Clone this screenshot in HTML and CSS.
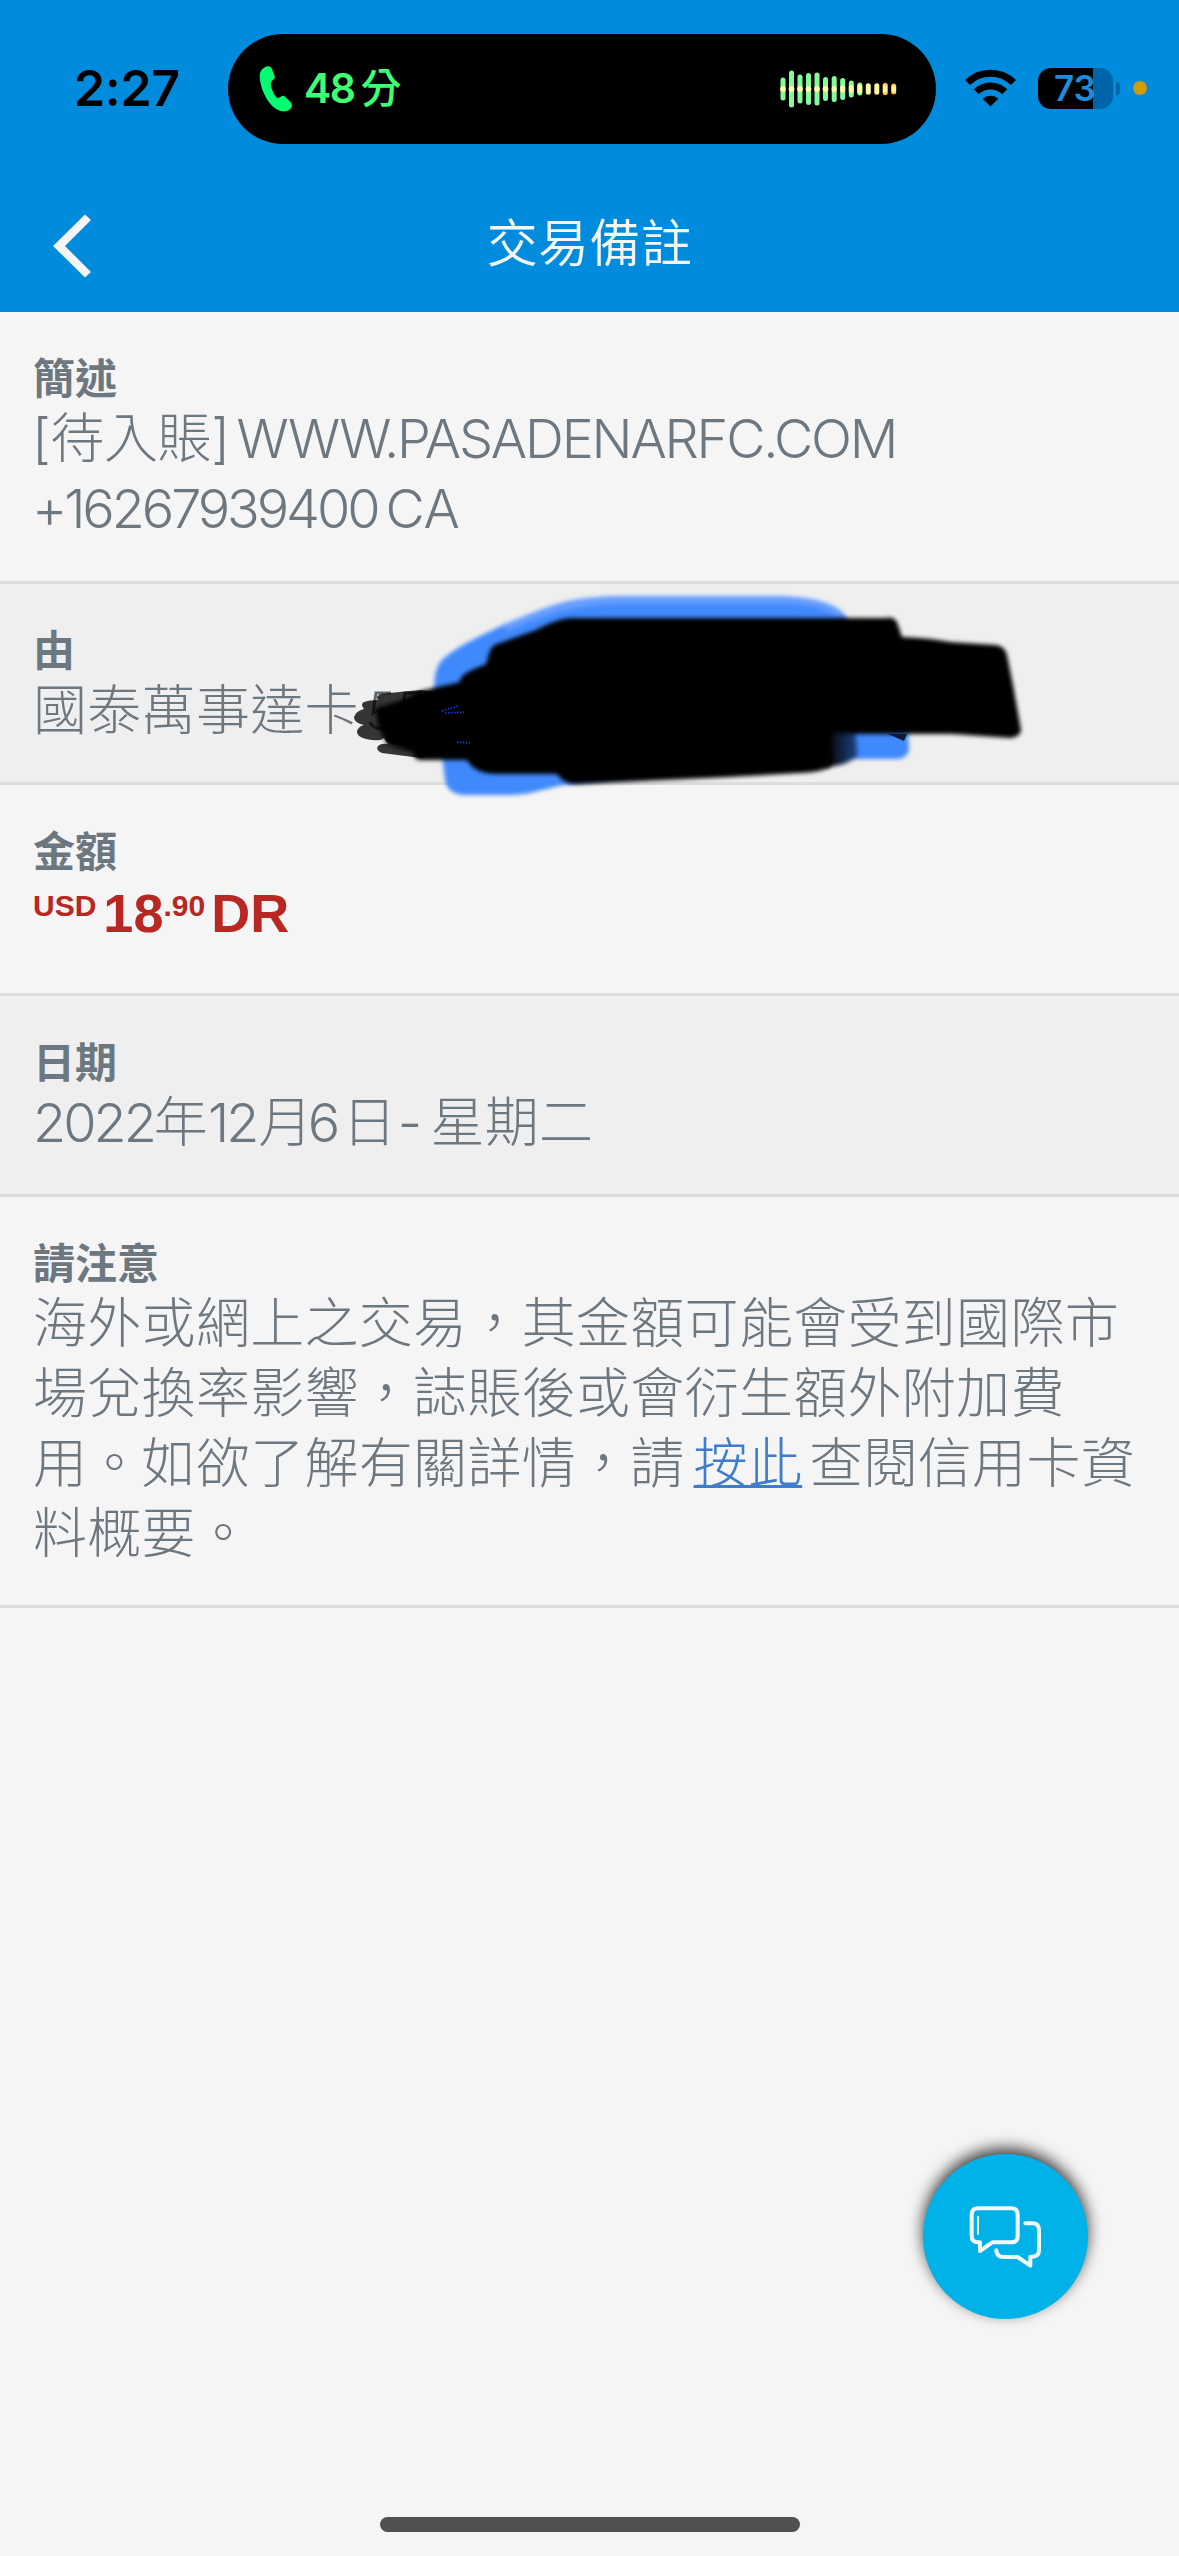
FILE: index.html
```html
<!DOCTYPE html>
<html lang="zh-Hant">
<head>
<meta charset="utf-8">
<title>交易備註</title>
<link rel="stylesheet" href="styles.css">
</head>
<body>
<div class="screen">
  <header class="header">
    <div class="status">
      <div class="time">2:27</div>
      <div class="island">
        <svg class="phone" width="34" height="46" viewBox="0 0 34 46"><path d="M7 .8C9.500-.3 12 .5 13 3L15.800 10.500C16.500 13 12.500 14 11.800 17.500C11.500 21 14.500 28 17.500 31.500C20 33.500 22 28.800 25 29.800L32 36.500C35 41 30 45.500 25 45.500C16 45.500 8 36 3.500 24C.5 15-2 4 7 .8Z" fill="#04fc70"/></svg>
        <span class="call">48<span class="unit">分</span></span>
        <svg class="wave" width="118" height="40" viewBox="0 0 118 40">
          <defs><linearGradient id="tip" x1="0" y1="0" x2="0" y2="1"><stop offset="0" stop-color="#ff9d1c"/><stop offset=".3" stop-color="#fff29a"/><stop offset=".7" stop-color="#fff29a"/><stop offset="1" stop-color="#ff9d1c"/></linearGradient></defs>
          <g fill="#84fb98">
            <rect x="0.500" y="8.500" width="5" height="23" rx="2.500"/><rect x="9" y="1.500" width="5" height="37" rx="2.500"/><rect x="17.500" y="5.500" width="5" height="29" rx="2.500"/><rect x="26" y="4" width="5" height="32" rx="2.500"/><rect x="34.500" y="3.500" width="5" height="33" rx="2.500"/><rect x="43" y="8" width="5" height="24" rx="2.500"/><rect x="51.700" y="7" width="5" height="26" rx="2.500"/><rect x="60.200" y="9" width="5" height="22" rx="2.500"/><rect x="68.800" y="11.500" width="5" height="17" rx="2.500"/><rect x="77.300" y="13.500" width="5" height="13" rx="2.500"/>
          </g>
          <g fill="#fff8a0">
            <circle cx="3" cy="20" r="2.900"/><circle cx="11.500" cy="20" r="2.900"/><circle cx="20" cy="20" r="2.900"/><circle cx="28.500" cy="20" r="2.900"/><circle cx="37" cy="20" r="2.900"/><circle cx="45.500" cy="20" r="2.900"/><rect x="51.700" y="17" width="5" height="6" rx="2"/><rect x="60.200" y="16.500" width="5" height="7" rx="2"/><rect x="68.800" y="16" width="5" height="8" rx="2"/><rect x="77.300" y="15.500" width="5" height="9" rx="2"/><rect x="85.800" y="14.300" width="5" height="11.500" rx="2.500"/><rect x="94.300" y="14.300" width="5" height="11.500" rx="2.500"/>
          </g>
          <rect x="102.700" y="13.700" width="5" height="12.600" rx="2.500" fill="url(#tip)"/><rect x="111.200" y="14.500" width="5" height="11" rx="2.500" fill="url(#tip)"/>
        </svg>
      </div>
      <svg class="wifi" width="51" height="38" viewBox="0 0 51 38"><g fill="none" stroke="#000" stroke-width="7"><path d="M2.500 13.500A33 33 0 0 1 48.500 13.500"/><path d="M11.200 22.700A20.500 20.500 0 0 1 39.800 22.700"/></g><path d="M25.500 37.500L17.700 29.800A11.500 11.500 0 0 1 33.300 29.800Z"/></svg>
      <div class="battery"><span class="level">73</span></div>
      <div class="nub"></div>
      <div class="mic"></div>
    </div>
    <nav class="nav">
      <svg class="back" width="38" height="64" viewBox="0 0 38 64"><path d="M32 0.500L38 6L12 32L38 58L32 63.500L0 32Z" fill="#f5f5f5"/></svg>
      <h1 class="title">交易備註</h1>
    </nav>
  </header>

  <main>
    <section class="row first">
      <h2 class="label">簡述</h2>
      <p class="value"><span class="tag">[待入賬]</span><span class="host">WWW.PASADENARFC.COM</span><br><span class="num tel">+16267939400</span><span class="state">CA</span></p>
    </section>
    <section class="row alt">
      <h2 class="label">由</h2>
      <p class="value">國泰萬事達卡</p>
      <svg class="scribble" width="700" height="230" viewBox="340 580 700 230">
        <defs>
          <filter id="soft" x="-5%" y="-10%" width="110%" height="120%"><feGaussianBlur stdDeviation="2"/></filter>
          <linearGradient id="fade" x1="0" x2="1" y1="0" y2="0"><stop offset="0" stop-color="#000"/><stop offset="1" stop-color="#1f4688"/></linearGradient>
        </defs>
        <g fill="none" stroke="#5d666e" stroke-width="3"><path d="M391 693H376L373 713Q386 706 391 717Q392 729 381 729Q372 728 370 722"/><path d="M421 693H405L402 713"/></g>
        <g filter="url(#soft)">
          <path d="M434 690C434 676 436 665 444 658C462 643 485 634 505 624C535 612 560 600 590 598Q605 596 626 596H780C805 597 825 601 837 608Q845 613 848 622V650L907 700L909 750Q907 759 896 759H850L700 770L563 785L530 793Q520 795 505 795H462Q447 793 445 780L442 755Z" fill="#4089fd"/>
          <path d="M505 628C545 610 575 601 626 600H780C810 600 830 606 840 615" fill="none" stroke="#669dff" stroke-width="7"/>
          <path d="M828 730H856L858 757L844 764L825 768Z" fill="url(#fade)"/>
        </g>
        <g fill="#000" fill-opacity=".78">
          <path d="M381 694Q398 692 421 690L436 692V753L421 758L382 753Q375 750 378 746Q381 743 388 744L384 738Q380 742 366 739Q356 736 357 731Q359 726 364 725Q354 723 354 717Q356 711 364 709Q360 704 364 702Q369 700 378 700Q375 696 381 694Z"/>
        </g>
        <path d="M386 742H414V749L388 746Z" fill="#efefef" fill-opacity=".12"/>
        <g filter="url(#soft)">
          <path d="M378 727L376 708L402 700L421 691L460 682C460 673 475 669 486 664C490 651 490 645 500 643L536 630Q560 617 575 618H885Q893 616 897 622L902 637Q930 638 950 642L995 645Q1004 645 1007 655L1013 685L1021 730Q1021 736 1011 738L952 734H833L832 750Q835 760 829 767Q822 772 800 773L730 777L577 784Q563 784 557 774H494Q474 773 467 760H421Q414 760 413 752L388 745Z" fill="#000"/>
        </g>
        <path d="M888 734H907L904 741Z" fill="#0c1a33"/>
        <g fill="none" stroke="#0b3cff" stroke-width="1.500" stroke-dasharray="1.500 1.500"><path d="M442 711L458 706"/><path d="M445 713L464 712"/><path d="M457 742L470 743"/></g>
      </svg>
    </section>
    <section class="row">
      <h2 class="label">金額</h2>
      <div class="amount"><span class="small usd">USD</span><span class="big">18</span><span class="small cents">.90</span><span class="big">DR</span></div>
    </section>
    <section class="row alt">
      <h2 class="label">日期</h2>
      <p class="value"><span class="num">2022</span>年<span class="num month">12</span>月<span class="num day">6</span>日<span class="dash">-</span>星期二</p>
    </section>
    <section class="row">
      <h2 class="label">請注意</h2>
      <p class="value">海外或網上之交易，其金額可能會受到國際市<br>場兌換率影響，誌賬後或會衍生額外附加費<br>用。如欲了解有關詳情，請<a class="link">按此</a>查閱信用卡資<br>料概要。</p>
    </section>
  </main>

  <div class="chat">
    <svg width="165" height="165" viewBox="131 162 495 495" fill="none" stroke="#f3f8fb" stroke-width="12" stroke-linecap="round" stroke-linejoin="round">
      <path d="M296 325H396Q415 325 415 344V408Q415 427 396 427H339L302 453V427H296Q277 427 277 408V344Q277 325 296 325Z"/>
      <path d="M296 350V402" stroke-width="6"/>
      <path d="M438 370H459Q479 370 479 390V450Q479 470 460 470H453V497L415 471H374Q351 471 351 451"/>
    </svg>
  </div>
  <div class="home"></div>
</div>
</body>
</html>
```
FILE: styles.css
```css
* { box-sizing: border-box; margin: 0; padding: 0; }

body {
  width: 1179px;
  background: #f5f5f5;
  font-family: Inter, "Noto Sans CJK TC", sans-serif;
  color: #6d7780;
}

.screen { position: relative; width: 1179px; height: 2556px; overflow: hidden; }

.header { height: 312px; background: #008bdd; }

.status { display: flex; align-items: center; height: 178px; }

.time {
  width: 228px;
  padding: 0 0 3px 74px;
  font-size: 50px;
  font-weight: 600;
  line-height: 60px;
  letter-spacing: -.3px;
  color: #000;
  white-space: nowrap;
}

.island {
  display: flex;
  align-items: center;
  width: 708px;
  height: 110px;
  padding: 0 38px 0 31px;
  border-radius: 55px;
  background: #000;
}

.call {
  display: flex;
  margin-left: 11px;
  padding-bottom: 2px;
  font-size: 41px;
  font-weight: 600;
  line-height: 50px;
  color: #3dff74;
  letter-spacing: -1.5px;
}
.unit { margin-left: 6px; font-weight: 500; }
.wave { margin-left: auto; }

.wifi { margin: 0 0 2px 29px; }

.battery {
  width: 75px;
  height: 41px;
  margin: 0 0 2px 22px;
  border-radius: 13px;
  background: linear-gradient(90deg, #000 55px, #0064aa 55px);
}
.level {
  display: block;
  padding-left: 16px;
  font-size: 35px;
  font-weight: 600;
  line-height: 41px;
  color: #1c8ddc;
  letter-spacing: 0;
}
.nub { width: 4px; height: 13px; margin: 0 0 2px 3px; border-radius: 0 4px 4px 0; background: #0064aa; }
.mic { width: 14px; height: 14px; margin: 0 0 3px 13px; border-radius: 50%; background: #d19b08; }

.nav {
  display: grid;
  grid-template-columns: 91px 1fr 91px;
  align-items: center;
  height: 134px;
}
.back { margin: 1px 0 0 53px; }
.title {
  padding-bottom: 3px;
  font-size: 51px;
  font-weight: 350;
  line-height: 70px;
  letter-spacing: .4px;
  color: #f5f5f5;
  text-align: center;
}

.row {
  position: relative;
  padding: 42px 33px 36px;
  border-bottom: 3px solid #dddddd;
}
.alt { background: #efefef; }
.first { padding-bottom: 37px; }

.label { font-size: 42px; font-weight: 600; line-height: 50px; }

.value {
  font-size: 54px;
  font-weight: 300;
  line-height: 70px;
  letter-spacing: .3px;
  white-space: nowrap;
}
.tag { margin-left: -1px; letter-spacing: -.4px; }
.host { margin-left: 7px; letter-spacing: -2.2px; }
.num { letter-spacing: -3px; }
.tel { margin-left: -1px; letter-spacing: -3.1px; }
.state { margin-left: 8px; letter-spacing: -.5px; }
.month { margin-right: 2px; }
.day { margin: 0 5px 0 -5px; }
.dash { margin: 0 8px 0 1px; }
.link {
  margin: 0 7px 0 9px;
  color: #3f7ccc;
  text-decoration: underline;
  text-decoration-thickness: 3px;
}

/* free-hand redaction over the card number */
.scribble { position: absolute; left: 340px; top: -4px; z-index: 1; }

.amount {
  display: flex;
  align-items: flex-start;
  height: 80px;
  padding-top: 9px;
  font-family: "Liberation Sans", sans-serif;
  font-weight: 700;
  color: #b82722;
}
.big { font-size: 54px; line-height: 54px; }
.small { margin-top: 5px; font-size: 30px; line-height: 30px; }
.usd { margin-right: 7px; }
.cents { margin-right: 6px; }

.chat {
  position: absolute;
  left: 923px;
  top: 2154px;
  width: 165px;
  height: 165px;
  border-radius: 50%;
  background: #00b2e8;
  box-shadow: 0 -6px 15px rgba(0, 0, 0, .75);
}
.chat svg { display: block; }

.home {
  position: absolute;
  left: 380px;
  top: 2517px;
  width: 420px;
  height: 15px;
  border-radius: 8px;
  background: #505050;
}
```
